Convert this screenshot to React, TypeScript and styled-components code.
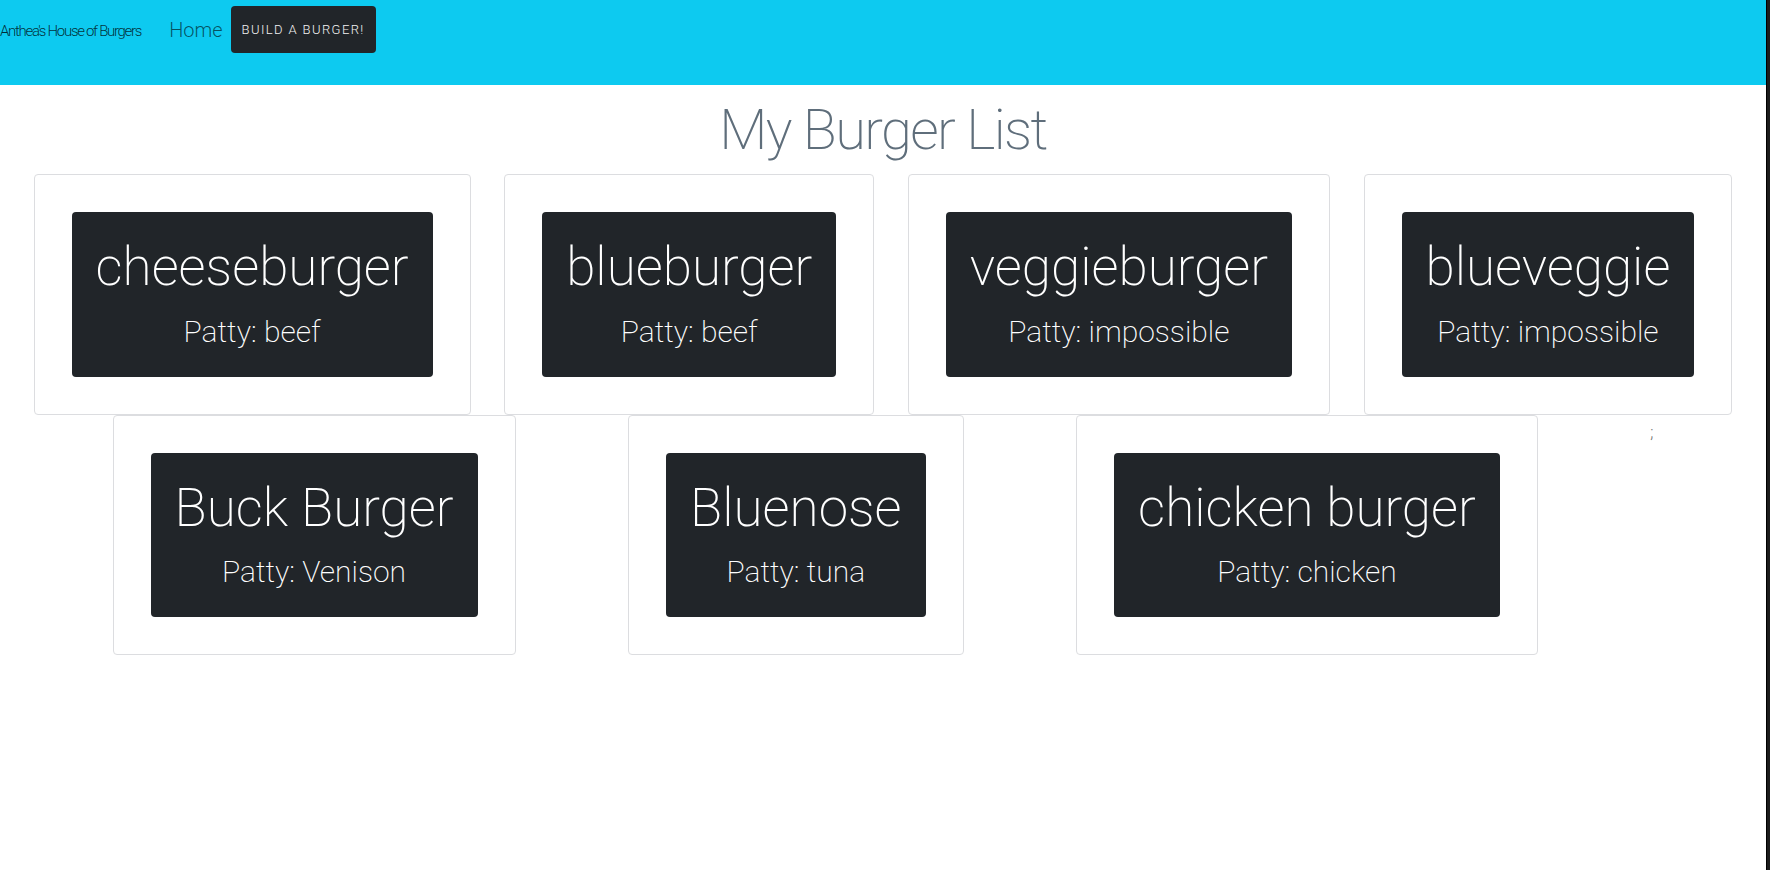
import styled, { createGlobalStyle } from "styled-components";

const GlobalStyle = createGlobalStyle`
  html, body {
    margin: 0;
    padding: 0;
  }
  body {
    font-family: Roboto, "Liberation Sans", sans-serif;
    font-weight: 300;
    color: #212529;
    background: #fff;
  }
  * {
    box-sizing: border-box;
  }
`;

const Window = styled.div`
  display: flex;
  min-height: 100vh;
`;

const Page = styled.div`
  flex: 1;
  min-width: 0;
  background: #fff;
`;

const ScrollEdge = styled.div`
  width: 4px;
  flex-shrink: 0;
  background: #1c1c1c;
  border-left: 1px solid #000;
`;

const Navbar = styled.nav`
  height: 85px;
  background-color: #0dcaf0;
  display: flex;
  align-items: flex-start;
  padding-top: 6px;
`;

const NavRow = styled.div`
  display: flex;
  align-items: center;
  height: 47px;
`;

const Brand = styled.a`
  font-size: 15px;
  letter-spacing: -1.3px;
  color: rgba(0, 0, 0, 0.78);
  text-decoration: none;
  margin-right: 28px;
  padding-top: 2px;
`;

const NavLink = styled.a`
  font-size: 20px;
  color: rgba(0, 0, 0, 0.6);
  text-decoration: none;
  margin-right: 8px;
`;

const BuildBtn = styled.button`
  height: 47px;
  padding: 0 11px;
  background: #212529;
  color: #f2f2f2;
  border: none;
  border-radius: 4px;
  font-family: Roboto, "Liberation Sans", sans-serif;
  font-weight: 300;
  font-size: 13px;
  letter-spacing: 1.4px;
  text-transform: uppercase;
`;

const Title = styled.h1`
  margin: 12px 0 10px;
  text-align: center;
  font-size: 56px;
  line-height: 1.2;
  font-weight: 200;
  letter-spacing: -1.6px;
  color: #5f6e7b;
`;

const BurgerList = styled.div`
  display: flex;
  flex-wrap: wrap;
  justify-content: space-evenly;
`;

const Card = styled.div`
  border: 1px solid #dcdde0;
  border-radius: 4px;
  padding: 37px;
`;

const Plate = styled.div`
  background: #212529;
  border-radius: 4px;
  padding: 24px 24px 27px;
  text-align: center;
  color: #fff;
`;

const BurgerName = styled.h2`
  margin: 0;
  font-size: 53px;
  line-height: 1.2;
  font-weight: 200;
  white-space: nowrap;
`;

const Patty = styled.h3`
  margin: 14px 0 0;
  font-size: 30px;
  line-height: 1.2;
  font-weight: 200;
  white-space: nowrap;
`;

const Stray = styled.span`
  font-size: 16px;
  line-height: 1.5;
  padding-top: 6px;
  color: #6b6b6b;
`;

interface IBurger {
  id: number;
  name: string;
  patty: string;
}

const burgers: IBurger[] = [
  { id: 1, name: "cheeseburger", patty: "beef" },
  { id: 2, name: "blueburger", patty: "beef" },
  { id: 3, name: "veggieburger", patty: "impossible" },
  { id: 4, name: "blueveggie", patty: "impossible" },
  { id: 5, name: "Buck Burger", patty: "Venison" },
  { id: 6, name: "Bluenose", patty: "tuna" },
  { id: 7, name: "chicken burger", patty: "chicken" },
];

function App() {
  return (
    <>
      <GlobalStyle />
      <Window>
        <Page>
          <Navbar>
            <NavRow>
              <Brand href="#">Anthea's House of Burgers</Brand>
              <NavLink href="#">Home</NavLink>
              <BuildBtn>Build a burger!</BuildBtn>
            </NavRow>
          </Navbar>
          <Title>My Burger List</Title>
          <BurgerList>
            {burgers.map((burger) => (
              <Card key={burger.id}>
                <Plate>
                  <BurgerName>{burger.name}</BurgerName>
                  <Patty>Patty: {burger.patty}</Patty>
                </Plate>
              </Card>
            ))}
            <Stray>;</Stray>
          </BurgerList>
        </Page>
        <ScrollEdge />
      </Window>
    </>
  );
}

export default App;
